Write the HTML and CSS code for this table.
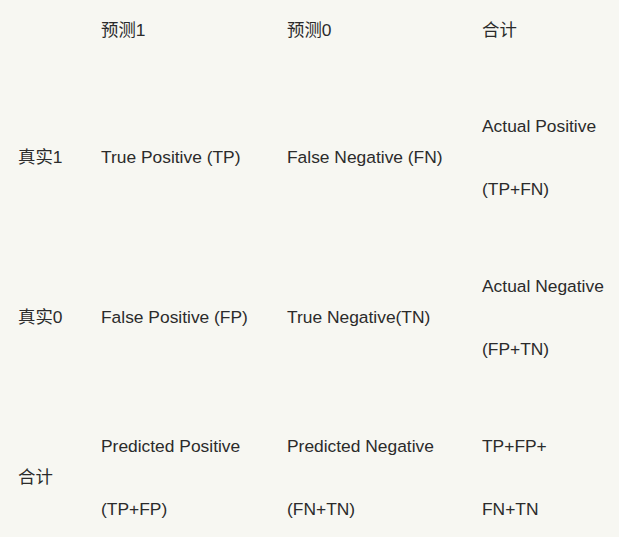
FILE: index.html
```html
<!DOCTYPE html>
<html lang="zh">
<head>
<meta charset="utf-8">
<link rel="stylesheet" href="styles.css">
</head>
<body>
<div class="table">
  <div class="cell head"></div>
  <div class="cell head">预测1</div>
  <div class="cell head">预测0</div>
  <div class="cell head">合计</div>

  <div class="cell">真实1</div>
  <div class="cell">True Positive (TP)</div>
  <div class="cell">False Negative (FN)</div>
  <div class="cell stack"><span>Actual Positive</span><span>(TP+FN)</span></div>

  <div class="cell">真实0</div>
  <div class="cell">False Positive (FP)</div>
  <div class="cell">True Negative(TN)</div>
  <div class="cell stack"><span>Actual Negative</span><span>(FP+TN)</span></div>

  <div class="cell">合计</div>
  <div class="cell stack"><span>Predicted Positive</span><span>(TP+FP)</span></div>
  <div class="cell stack"><span>Predicted Negative</span><span>(FN+TN)</span></div>
  <div class="cell stack"><span>TP+FP+</span><span>FN+TN</span></div>
</div>
</body>
</html>
```
FILE: styles.css
```css
html, body {
  margin: 0;
  padding: 0;
  background: #f7f7f2;
}
body {
  font-family: "Liberation Sans", Arial, "Noto Sans CJK SC", sans-serif;
  font-size: 17.4px;
  color: #2b2b2b;
  overflow: hidden;
}
.table {
  display: grid;
  grid-template-columns: 83px 186px 195px 1fr;
  grid-template-rows: 77px repeat(3, 160px);
  padding-left: 18px;
}
.cell {
  display: flex;
  flex-direction: column;
  justify-content: center;
  line-height: 24px;
  white-space: nowrap;
}
.head {
  padding-bottom: 17px;
}
.stack {
  gap: 39px;
}
```
